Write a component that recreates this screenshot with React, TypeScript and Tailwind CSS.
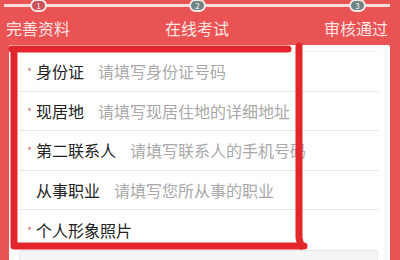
import React from 'react';

const steps = [
  { n: 1, x: 38, active: true },
  { n: 2, x: 197, active: false },
  { n: 3, x: 357, active: false },
];

const rows = [
  { label: '身份证', hint: '请填写身份证号码', required: true },
  { label: '现居地', hint: '请填写现居住地的详细地址', required: true },
  { label: '第二联系人', hint: '请填写联系人的手机号码', required: true },
  { label: '从事职业', hint: '请填写您所从事的职业', required: false },
];

export default function App() {
  return (
    <div
      className="relative w-[400px] h-[260px] overflow-hidden bg-[#ea5354]"
      style={{ fontFamily: '"Noto Sans CJK SC", "Noto Sans", sans-serif' }}
    >
      {/* Steps */}
      <div className="relative h-[14px]">
        <div className="absolute left-[4px] right-[10px] top-[4px] h-[3px] bg-[#f9dcdc]" />
        {steps.map((s) => (
          <div
            key={s.n}
            className={`absolute top-[-1px] w-[17px] h-[13px] rounded-full border-2 border-[#f6e6e6] flex items-center justify-center text-[8px] leading-none text-white ${
              s.active ? 'bg-[#c9505a]' : 'bg-[#6f8585]'
            }`}
            style={{ left: s.x - 8 }}
          >
            {s.n}
          </div>
        ))}
      </div>
      <div className="flex justify-between px-[6px] pr-[12px] mt-[4px] text-[16px] leading-[20px] text-[#fbe5e5]">
        <span>完善资料</span>
        <span>在线考试</span>
        <span>审核通过</span>
      </div>

      {/* Form card */}
      <div className="mx-[9px] mr-[10px] mt-[7px] bg-white rounded-[2px] pt-[6px] pl-[10px] pr-[12px]">
        <div className="h-px bg-[#f0f0f0]" />
        {rows.map((r) => (
          <div key={r.label} className="flex items-center h-[39.5px] border-b border-[#e6e6e6] text-[16px]">
            <span className="w-[17px] text-[11px] text-[#c77] pl-[8px]">{r.required ? '*' : ''}</span>
            <span className="text-[#222]">{r.label}</span>
            <span className="ml-[14px] text-[#a9a9a9]">{r.hint}</span>
          </div>
        ))}
        <div className="flex items-center h-[39.5px] text-[16px]">
          <span className="w-[17px] text-[11px] text-[#c77] pl-[8px]">*</span>
          <span className="text-[#222]">个人形象照片</span>
        </div>
        <div className="h-[30px] bg-[#f5f5f5] border border-[#e8e8e8] rounded-[3px]" />
      </div>

      {/* Hand-drawn marker */}
      <svg className="absolute inset-0 pointer-events-none" width="400" height="260" viewBox="0 0 400 260">
        <g fill="none" stroke="#e2262b" strokeWidth="7" strokeLinecap="round" strokeLinejoin="round">
          <path d="M12 49 L288 49" />
          <path d="M299 46 L299 238 L301 246" />
          <path d="M14 50 L14 246 L304 246" />
        </g>
      </svg>
    </div>
  );
}
